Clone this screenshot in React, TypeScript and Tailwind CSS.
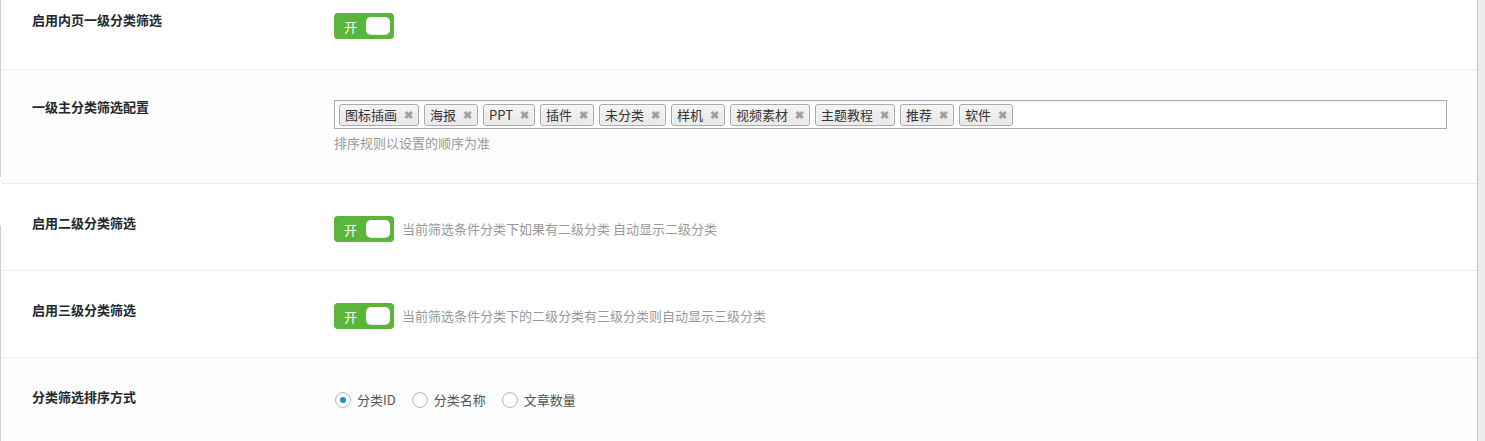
import React from "react";

const font = { fontFamily: '"Noto Sans CJK SC", "Noto Sans", sans-serif' };

const tags = ["图标插画", "海报", "PPT", "插件", "未分类", "样机", "视频素材", "主题教程", "推荐", "软件"];

function Toggle() {
  return (
    <div className="flex h-[26px] w-[60px] shrink-0 items-center justify-between rounded-[4px] bg-[#5cb53b] pl-[10px] pr-[4px]">
      <span className="text-[13px] leading-none text-white">开</span>
      <span className="h-[18px] w-[24px] rounded-[5px] bg-white shadow-[inset_0_-1px_0_rgba(0,0,0,0.08)]" />
    </div>
  );
}

function Row({
  label,
  children,
  className,
}: {
  label: string;
  children: React.ReactNode;
  className?: string;
}) {
  return (
    <div className={"flex border-b border-[#ececec] " + (className ?? "")}>
      <div className="-mt-[2px] w-[332px] shrink-0 pl-[30px] text-[13px] font-bold leading-[18px] text-[#23282d]">
        {label}
      </div>
      <div className="flex-1">{children}</div>
    </div>
  );
}

function Radio({ label, checked }: { label: string; checked?: boolean }) {
  return (
    <label className="flex items-center gap-[6px]">
      <span className="flex h-[16px] w-[16px] items-center justify-center rounded-full border border-[#b4b9be] bg-white shadow-[inset_0_1px_2px_rgba(0,0,0,0.07)]">
        {checked && <span className="h-[6px] w-[6px] rounded-full bg-[#1e8cbe]" />}
      </span>
      <span className="text-[13px] text-[#555]">{label}</span>
    </label>
  );
}

function Tag({ text }: { text: string }) {
  return (
    <span className="flex h-[22px] items-center gap-[7px] rounded-[3px] border border-[#aaa] bg-gradient-to-b from-[#f4f4f4] to-[#e8e8e8] pl-[5px] pr-[5px] text-[13px] leading-none text-[#333] shadow-[inset_0_0_2px_white]">
      <span>{text}</span>
      <span className="text-[11px] font-bold text-[#a0a0a0]">✖</span>
    </span>
  );
}

export default function App() {
  return (
    <div className="flex h-[441px] w-[1485px] overflow-hidden bg-white" style={font}>
      {/* left edge strip */}
      <div className="flex w-[2px] shrink-0 flex-col">
        <div className="h-[177px] border-l border-[#d0d0d0]" />
        <div className="h-[48px]" />
        <div className="flex-1 border-l border-[#d0d0d0]" />
      </div>

      <div className="flex flex-1 flex-col border-r border-[#c8c8c8]">
        <Row label="启用内页一级分类筛选" className="h-[70px] pt-[13px]">
          <Toggle />
        </Row>

        <Row label="一级主分类筛选配置" className="h-[114px] bg-[#fdfdfd] pt-[30px]">
          <div className="flex w-[1113px] flex-col gap-[5px]">
            <div className="flex h-[29px] items-center gap-[5px] border border-[#aaa] bg-white pl-[4px] shadow-[inset_0_3px_4px_-2px_rgba(0,0,0,0.06)]">
              {tags.map((t) => (
                <Tag key={t} text={t} />
              ))}
            </div>
            <span className="text-[13px] leading-[18px] text-[#999]">排序规则以设置的顺序为准</span>
          </div>
        </Row>

        <Row label="启用二级分类筛选" className="h-[87px] pt-[32px]">
          <div className="flex items-center gap-[8px]">
            <Toggle />
            <span className="text-[13px] text-[#999]">当前筛选条件分类下如果有二级分类 自动显示二级分类</span>
          </div>
        </Row>

        <Row label="启用三级分类筛选" className="h-[87px] pt-[32px]">
          <div className="flex items-center gap-[8px]">
            <Toggle />
            <span className="text-[13px] text-[#999]">当前筛选条件分类下的二级分类有三级分类则自动显示三级分类</span>
          </div>
        </Row>

        <Row label="分类筛选排序方式" className="flex-1 border-b-0 bg-[#fdfdfd] pt-[32px]">
          <div className="flex items-center gap-[16px] pl-[1px]">
            <Radio label="分类ID" checked />
            <Radio label="分类名称" />
            <Radio label="文章数量" />
          </div>
        </Row>
      </div>

      <div className="w-[7px] shrink-0 bg-[#ececec]" />
    </div>
  );
}
